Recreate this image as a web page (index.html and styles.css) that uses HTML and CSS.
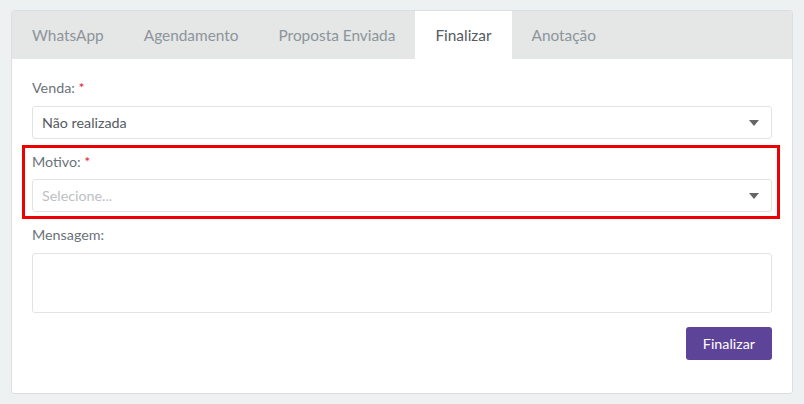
FILE: index.html
```html
<!DOCTYPE html>
<html>
	<head>
		<meta charset="UTF-8">
		<title>Finalizar</title>
		<link rel="stylesheet" href="styles.css">
	</head>
	<body>
		<div class="card">
			<nav class="tabs">
				<span class="tab">WhatsApp</span>
				<span class="tab">Agendamento</span>
				<span class="tab">Proposta Enviada</span>
				<span class="tab active">Finalizar</span>
				<span class="tab">Anotação</span>
			</nav>
			<div class="panel">
				<div class="group">
					<label>Venda: <em>*</em></label>
					<div class="select">
						<span>Não realizada</span>
						<i class="caret"></i>
					</div>
				</div>
				<div class="group highlight">
					<label>Motivo: <em>*</em></label>
					<div class="select">
						<span class="placeholder">Selecione...</span>
						<i class="caret"></i>
					</div>
				</div>
				<div class="group">
					<label>Mensagem:</label>
					<div class="textarea"></div>
				</div>
				<div class="actions">
					<button class="btn">Finalizar</button>
				</div>
			</div>
		</div>
	</body>
</html>
```

FILE: styles.css
```css
body, html {
	margin: 0;
	padding: 0;
	background: #eef1f2;
	font-family: "Lato", "Open Sans", sans-serif;
}
body { padding: 10px 11px 11px 11px; }

.card {
	background: #fff;
	border: 1px solid #dcdfe0;
	border-radius: 3px;
	overflow: hidden;
}

.tabs {
	display: flex;
	height: 48px;
	background: #e5e6e6;
}
.tab {
	padding: 0 20px;
	line-height: 48px;
	font-size: 15.4px;
	color: #8c959b;
}
.tab.active {
	background: #fff;
	color: #555b61;
}

.panel { padding: 19px 20px 33px 20px; }

.group {
	position: relative;
	margin-bottom: 13px;
}
.group label {
	display: block;
	font-size: 14.3px;
	line-height: 20px;
	color: #6b737a;
	margin-bottom: 8px;
}
.group label em {
	font-style: normal;
	color: #d9262b;
}
.highlight label { margin-bottom: 7px; }
.highlight::before {
	content: '';
	position: absolute;
	top: -7px;
	bottom: -7px;
	left: -10px;
	right: -8px;
	border: 3px solid #ee0000;
	pointer-events: none;
}

.select {
	display: flex;
	align-items: center;
	justify-content: space-between;
	height: 31px;
	padding: 0 12px 0 9px;
	border: 1px solid #e1e3e4;
	border-radius: 3px;
	font-size: 14.3px;
	color: #555b61;
}
.placeholder { color: #bcc0c3; }
.caret {
	width: 0;
	height: 0;
	border-left: 5px solid transparent;
	border-right: 5px solid transparent;
	border-top: 6px solid #666;
}

.textarea {
	height: 58px;
	border: 1px solid #e1e3e4;
	border-radius: 3px;
}

.actions {
	display: flex;
	justify-content: flex-end;
	margin-top: 14px;
}
.btn {
	background: #5e4499;
	color: #fff;
	border: 0;
	border-radius: 3px;
	height: 33px;
	padding: 0 17px;
	font-family: inherit;
	font-size: 14.3px;
}
```
